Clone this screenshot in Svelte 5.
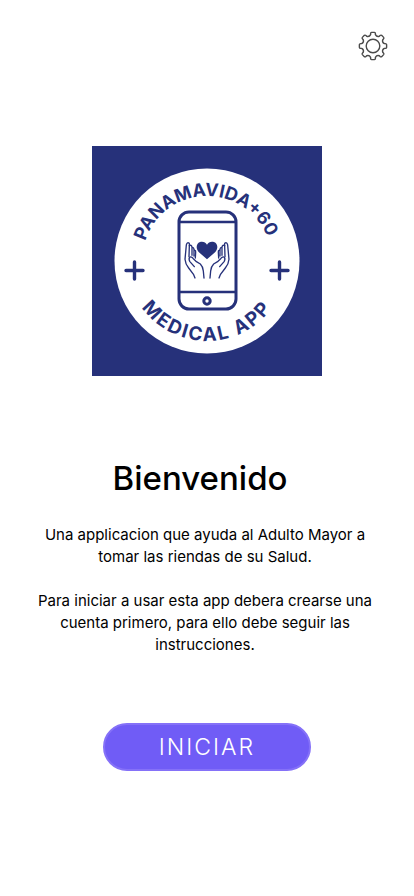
<script>
  const point = (radius, degrees) => {
    const a = (degrees * Math.PI) / 180;
    return `${(16 + radius * Math.cos(a)).toFixed(2)} ${(16 + radius * Math.sin(a)).toFixed(2)}`;
  };

  // Eight rounded teeth joined by shallow concave valleys
  const gear =
    Array.from({ length: 8 }, (_, i) => {
      const a = i * 45 - 90;
      return [
        `${i ? 'L' : 'M'}${point(11.6, a - 12)}`,
        `L${point(12.6, a - 11)}`,
        `Q${point(13.7, a - 10)} ${point(13.7, a - 6)}`,
        `L${point(13.7, a + 6)}`,
        `Q${point(13.7, a + 10)} ${point(12.6, a + 11)}`,
        `L${point(11.6, a + 12)}`,
        `Q${point(9.6, a + 22.5)} ${point(11.6, a + 33)}`
      ].join('');
    }).join('') + 'Z';
</script>

<div class="screen">
  <header>
    <button class="settings" type="button" aria-label="Ajustes">
      <svg viewBox="0 0 32 32" aria-hidden="true">
        <path d={gear} />
        <circle cx="16" cy="16" r="6.8" />
      </svg>
    </button>
  </header>

  <main>
    <svg class="logo" viewBox="0 0 230 230" role="img" aria-label="Panamavida+60 Medical App">
      <defs>
        <path id="arc-top" d="M50 115A65 65 0 0 1 180 115" />
        <path id="arc-bottom" d="M35 115A80 80 0 0 0 195 115" />
        <g id="hand">
          <path d="M135 234L131 224L116 204Q106 192 105 178L109 135Q111 126 117 129Q119 131 118 138L117 170" />
          <path d="M118 137Q124 133 126 141L126 166M126 144Q131 140 132 149L132 168M132 152Q137 149 137 157L136 174" />
          <path d="M133 200L119 184Q115 175 120 171Q125 169 130 176L138 184L151 192Q159 200 160 213L162 234" />
        </g>
      </defs>
      <rect width="230" height="230" fill="#26317a" />
      <circle cx="115" cy="115" r="92.5" fill="#fff" />
      <g class="line">
        <rect x="87" y="66" width="57" height="97" rx="10" />
        <path d="M87 76H144M87 146H144" stroke-width="2.4" />
        <circle cx="115" cy="155" r="3.2" />
        <path class="plus" d="M34 124.5H51M42.5 116V133M179 124.5H196M187.5 116V133" />
      </g>
      <g transform="translate(58 54) scale(.3333)">
        <path d="M171 178L146 156C137 147 138 130 150 126C159 123 167 127 171 134C175 127 183 123 192 126C204 130 205 147 196 156Z" fill="#26317a" />
        <g class="hands">
          <use href="#hand" />
          <use href="#hand" transform="translate(342 0) scale(-1 1)" />
        </g>
      </g>
      <text class="top"><textPath href="#arc-top" startOffset="49%">PANAMAVIDA+60</textPath></text>
      <text class="bottom"><textPath href="#arc-bottom" startOffset="50%">MEDICAL APP</textPath></text>
    </svg>

    <h1>Bienvenido</h1>
    <div class="copy">
      <p>Una applicacion que ayuda al Adulto Mayor a tomar las riendas de su Salud.</p>
      <p>Para iniciar a usar esta app debera crearse una cuenta primero, para ello debe seguir las instrucciones.</p>
    </div>
    <button class="start" type="button">INICIAR</button>
  </main>
</div>

<style>
  :global(body) {
    background: #fff;
  }

  .screen {
    font-family: Inter, "Liberation Sans", sans-serif;
    color: #000;
    min-height: 100vh;
  }

  header {
    display: flex;
    justify-content: flex-end;
    padding: 30px 25px 0;
  }

  .settings {
    width: 32px;
    height: 32px;
    padding: 0;
    border: 0;
    background: none;
    cursor: pointer;
  }

  .settings svg {
    display: block;
    fill: none;
    stroke: #4a4a4a;
    stroke-width: 1.4;
    stroke-linejoin: round;
  }

  main {
    display: flex;
    flex-direction: column;
    align-items: center;
    padding: 84px 24px 40px;
  }

  .logo {
    width: 230px;
    height: 230px;
  }

  .logo text {
    fill: #26317a;
    font-weight: 700;
    text-anchor: middle;
  }

  .top {
    font-size: 18px;
  }

  .bottom {
    font-size: 19px;
    letter-spacing: 2px;
  }

  .line {
    fill: none;
    stroke: #26317a;
    stroke-width: 3;
  }

  .plus {
    stroke-width: 3.4;
    stroke-linecap: round;
  }

  .hands {
    fill: none;
    stroke: #26317a;
    stroke-width: 4;
    stroke-linecap: round;
    stroke-linejoin: round;
  }

  h1 {
    margin: 80px 0 0;
    padding-right: 14px;
    font-size: 33px;
    line-height: 44px;
    font-weight: 500;
  }

  .copy {
    display: flex;
    flex-direction: column;
    gap: 22px;
    max-width: 340px;
    margin-top: 24px;
    padding-right: 4px;
    text-align: center;
    font-size: 15px;
    line-height: 22px;
  }

  p {
    margin: 0;
  }

  .start {
    width: 208px;
    height: 48px;
    margin-top: 67px;
    padding: 0;
    border: 2px solid #8571f8;
    border-radius: 24px;
    background: #705cf6;
    color: #fff;
    font: 300 23px/44px Inter, "Liberation Sans", sans-serif;
    letter-spacing: 2px;
    cursor: pointer;
  }
</style>
